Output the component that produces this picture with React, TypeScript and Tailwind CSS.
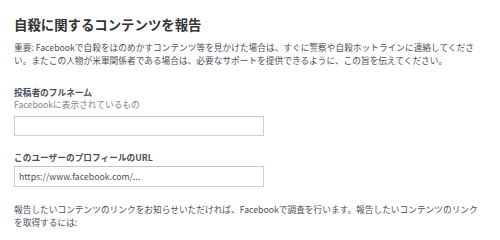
import React from 'react';

const font = { fontFamily: '"Helvetica Neue", "Noto Sans CJK JP", "Liberation Sans", sans-serif' };

export default function App() {
  return (
    <div className="w-[500px] h-[236px] overflow-hidden bg-white pl-[14px] pr-[4px] pt-[15px]" style={font}>
      {/* Heading */}
      <h1 className="text-[13.4px] leading-[18px] font-bold text-[#333]">自殺に関するコンテンツを報告</h1>

      {/* Intro */}
      <p className="mt-[9px] text-[8.7px] leading-[12.5px] text-[#4b4f56] whitespace-nowrap">
        重要: Facebookで自殺をほのめかすコンテンツ等を見かけた場合は、すぐに警察や自殺ホットラインに連絡してくださ
        <br />
        い。またこの人物が米軍関係者である場合は、必要なサポートを提供できるように、この旨を伝えてください。
      </p>

      {/* Full name */}
      <div className="mt-[20px]">
        <label className="block text-[8.7px] leading-[12px] font-bold text-[#4b4f56]">投稿者のフルネーム</label>
        <div className="text-[8.7px] leading-[12px] text-[#80848c]">Facebookに表示されているもの</div>
        <input
          type="text"
          className="mt-[5px] block w-[250px] h-[20px] border border-[#ccd0d5] border-t-[#bdc7d8] bg-white px-[4px] text-[8.7px] text-[#4b4f56] outline-none"
        />
      </div>

      {/* Profile URL */}
      <div className="mt-[15px]">
        <label className="block text-[8.7px] leading-[13px] font-bold text-[#4b4f56]">このユーザーのプロフィールのURL</label>
        <input
          type="text"
          defaultValue="https://www.facebook.com/..."
          className="mt-[2px] block w-[250px] h-[21px] border border-[#ccd0d5] border-t-[#bdc7d8] bg-white px-[4px] text-[8.7px] text-[#4b4f56] outline-none"
          style={font}
        />
      </div>

      {/* Link info */}
      <p className="mt-[16px] text-[8.7px] leading-[13px] text-[#4b4f56] whitespace-nowrap">
        報告したいコンテンツのリンクをお知らせいただければ、Facebookで調査を行います。報告したいコンテンツのリンク
        <br />
        を取得するには:
      </p>
    </div>
  );
}
